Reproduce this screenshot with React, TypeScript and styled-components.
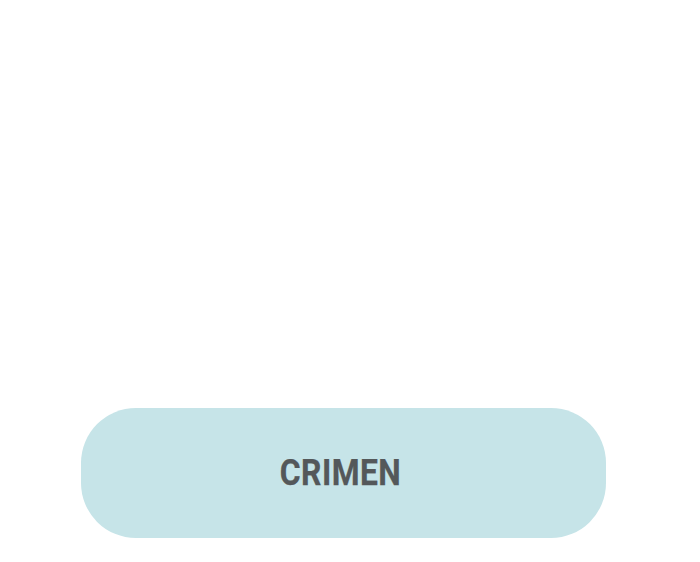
import React from "react";
import styled, { createGlobalStyle } from "styled-components";

const Global = createGlobalStyle`
  html, body { margin: 0; padding: 0; background: #ffffff; }
  body { font-family: Roboto, "Liberation Sans", sans-serif; }
`;

const Page = styled.div`
  width: 700px;
  height: 562px;
  box-sizing: border-box;
  padding: 408px 0 0 81px;
  display: flex;
  flex-direction: column;
  align-items: flex-start;
`;

const PillButton = styled.button`
  width: 525px;
  height: 130px;
  border: none;
  border-radius: 55px;
  background: #c6e4e8;
  display: flex;
  align-items: center;
  justify-content: center;
  padding: 0;
  cursor: pointer;
`;

const Label = styled.span`
  display: inline-block;
  font-family: Roboto, "Liberation Sans", sans-serif;
  font-weight: 700;
  font-size: 37px;
  line-height: 1;
  letter-spacing: 0.5px;
  color: #54585a;
  -webkit-text-stroke: 0.25px #54585a;
  transform: scaleX(0.86);
  margin-left: -5px;
  margin-top: -2px;
`;

export default function App() {
  return (
    <>
      <Global />
      <Page>
        <PillButton>
          <Label>CRIMEN</Label>
        </PillButton>
      </Page>
    </>
  );
}
